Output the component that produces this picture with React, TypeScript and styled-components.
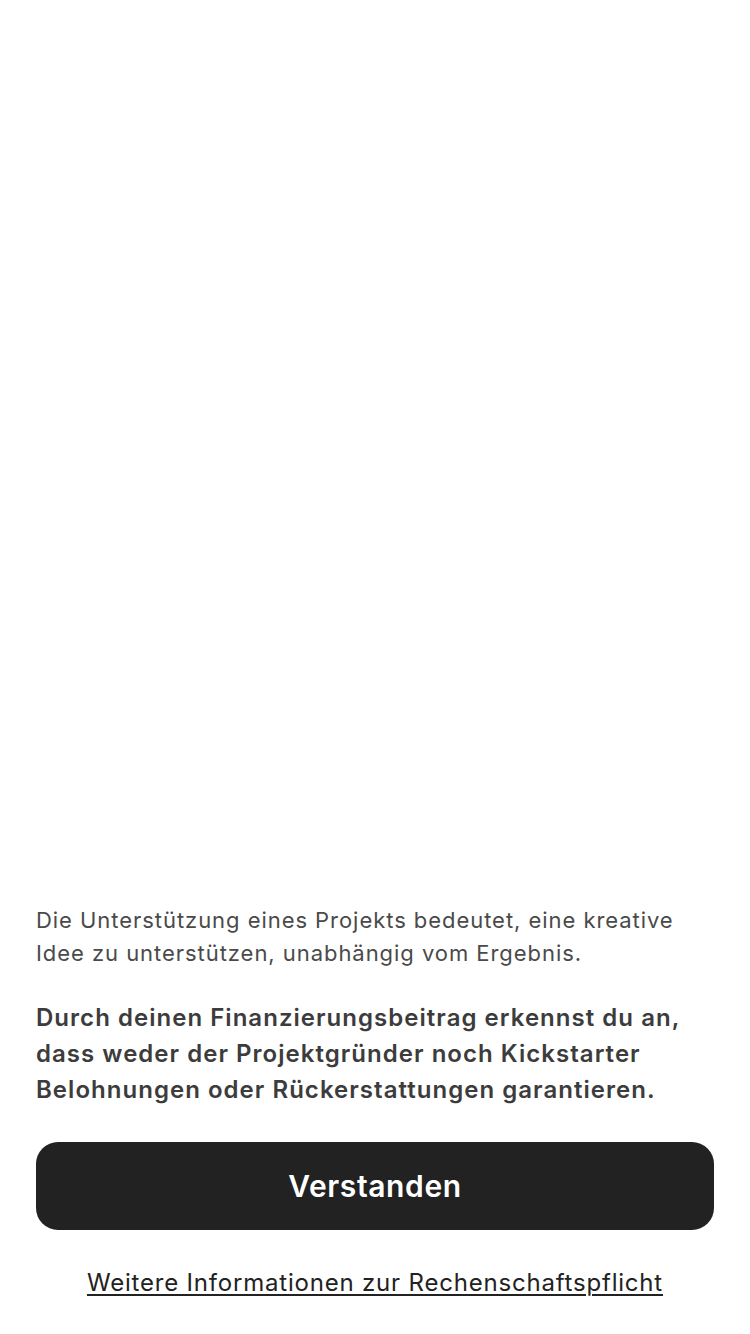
import styled, { createGlobalStyle } from 'styled-components'

const Global = createGlobalStyle`
  html, body {
    margin: 0;
    padding: 0;
    background: #fff;
  }
  body {
    font-family: Inter, "Noto Sans", sans-serif;
    -webkit-font-smoothing: antialiased;
  }
`

const Sheet = styled.main`
  min-height: 100vh;
  box-sizing: border-box;
  display: flex;
  flex-direction: column;
  justify-content: flex-end;
  padding: 0 36px 35px;
`

const Intro = styled.p`
  margin: 0 0 30px;
  font-size: 22px;
  line-height: 33px;
  color: #4a4a4a;
  letter-spacing: 0.95px;
`

const Notice = styled.p`
  margin: 0 0 34px;
  font-size: 24px;
  line-height: 36px;
  font-weight: 600;
  color: #3c3c3c;
  letter-spacing: 1.03px;
`

const Confirm = styled.button`
  height: 88px;
  width: 100%;
  border: none;
  border-radius: 22px;
  background: #222222;
  color: #fff;
  font-family: inherit;
  font-size: 30px;
  font-weight: 600;
  letter-spacing: 0.6px;
  cursor: pointer;
`

const MoreLink = styled.a`
  margin-top: 37px;
  align-self: center;
  font-size: 24px;
  line-height: 32px;
  color: #222;
  letter-spacing: 0.8px;
  text-decoration: underline;
  text-underline-offset: 3px;
  text-decoration-thickness: 2px;
`

export default function App() {
  return (
    <>
      <Global />
      <Sheet>
        <Intro>
          Die Unterstützung eines Projekts bedeutet, eine kreative Idee zu unterstützen, unabhängig vom Ergebnis.
        </Intro>
        <Notice>
          Durch deinen Finanzierungsbeitrag erkennst du an, dass weder der Projektgründer noch Kickstarter Belohnungen oder Rückerstattungen garantieren.
        </Notice>
        <Confirm>Verstanden</Confirm>
        <MoreLink href="#">Weitere Informationen zur Rechenschaftspflicht</MoreLink>
      </Sheet>
    </>
  )
}
